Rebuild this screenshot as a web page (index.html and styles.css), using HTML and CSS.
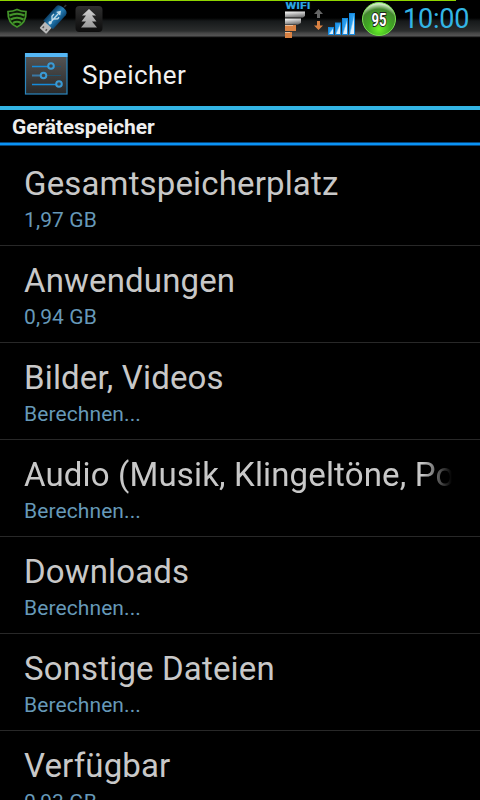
FILE: index.html
```html
<!DOCTYPE html>
<html lang="de">
<head>
    <meta charset="UTF-8">
    <meta name="viewport" content="width=device-width, initial-scale=1.0">
    <title>Speicher</title>
    <link rel="stylesheet" href="styles.css">
</head>
<body>
    <div class="statusbar">
        <div class="battery-line" style="width: 95%"></div>
        <div class="notifications">
            <svg width="120" height="38" viewBox="0 0 120 38">
                <defs>
                    <linearGradient id="usb" x1="0" y1="0" x2="1" y2="0">
                        <stop offset="0" stop-color="#0c3f66"/>
                        <stop offset=".5" stop-color="#2680b8"/>
                        <stop offset="1" stop-color="#0d4a78"/>
                    </linearGradient>
                    <linearGradient id="tile" x1="0" y1="0" x2="0" y2="1">
                        <stop offset="0" stop-color="#303030"/>
                        <stop offset="1" stop-color="#0c0c0c"/>
                    </linearGradient>
                    <linearGradient id="tree" x1="0" y1="0" x2="0" y2="1">
                        <stop offset="0" stop-color="#d0d0d0"/>
                        <stop offset="1" stop-color="#999"/>
                    </linearGradient>
                </defs>
                <!-- shield -->
                <path d="M8 11.5Q13 11.5 17 9.5Q21 11.5 26 11.5Q26.500 23 17 27Q7.500 23 8 11.5Z" fill="#0c1a08" stroke="#43952a" stroke-width="1.700"/>
                <path d="M9.500 15.500Q17 12 24.500 15.500M10.500 19.500Q17 16 23.500 19.500M13 23Q17 20.500 21 23" fill="none" stroke="#43952a" stroke-width="2.200"/>
                <!-- usb stick -->
                <g transform="translate(53.500 19) rotate(42)">
                    <path d="M0 -16V-19" stroke="#333" stroke-width="1.500"/>
                    <rect x="-4.500" y="7" width="9" height="9" rx="1" fill="#b9b9b9"/>
                    <path d="M-2 12V14M2 12V14" stroke="#555" stroke-width="1.500"/>
                    <path d="M-6.500 8V-11Q-6.500 -15 0 -15Q6.500 -15 6.500 -11V8Z" fill="url(#usb)"/>
                    <path d="M0 5V-9M-2 -7L0 -10L2 -7M0 2L-3 -1V-4M0 0L3 -3V-5" fill="none" stroke="#c4dce8" stroke-width="1.300"/>
                    <circle cx="0" cy="5" r="1.700" fill="#c4dce8"/>
                </g>
                <!-- tree -->
                <rect x="75.500" y="6" width="27" height="26" rx="4" fill="url(#tile)"/>
                <path d="M89 9L96 15.500H92L96.500 21.500H92L97 27.500H81L86 21.500H81.500L86 15.500H82Z" fill="url(#tree)"/>
            </svg>
        </div>
        <div class="indicators">
            <svg width="118" height="38" viewBox="280 0 118 38">
                <defs>
                    <linearGradient id="grey" x1="0" y1="0" x2=".3" y2="1">
                        <stop offset="0" stop-color="#fff"/>
                        <stop offset="1" stop-color="#777"/>
                    </linearGradient>
                    <linearGradient id="signal" x1="0" y1="0" x2="1" y2="1">
                        <stop offset="0" stop-color="#1a8ce4"/>
                        <stop offset=".45" stop-color="#2aa0f0"/>
                        <stop offset=".6" stop-color="#d9eefa"/>
                        <stop offset="1" stop-color="#e8f2fa"/>
                    </linearGradient>
                    <radialGradient id="ball" cx=".5" cy=".8" r=".75">
                        <stop offset="0" stop-color="#6cf52a"/>
                        <stop offset=".45" stop-color="#3faa22"/>
                        <stop offset=".8" stop-color="#43882e"/>
                        <stop offset="1" stop-color="#cfe8c4"/>
                    </radialGradient>
                </defs>
                <text class="wifi-label" x="285.500" y="8.500" textLength="25" lengthAdjust="spacingAndGlyphs">WIFI</text>
                <path d="M285 11.500H305V16L303 17.500H285Z" fill="url(#grey)"/>
                <path d="M285 18.500H301V23L298 24.500H285Z" fill="url(#grey)"/>
                <rect x="285" y="25" width="11" height="6" fill="#d98243"/>
                <rect x="285" y="32" width="7" height="6" fill="#d98243"/>
                <path d="M285 25.500H293M285 32.500H290" stroke="#e8bb98"/>
                <path d="M318.500 9L323 14H320V18H317V14H314Z" fill="#666"/>
                <path d="M318.500 30L323 25.500H320V21H317V25.500H314Z" fill="#d98243"/>
                <g fill="url(#signal)" stroke="#1688dc">
                    <rect x="328.500" y="27.500" width="5" height="7"/>
                    <rect x="335.500" y="23" width="5" height="11.500"/>
                    <rect x="342.500" y="18.500" width="5" height="16"/>
                    <rect x="349.500" y="13.500" width="5" height="21"/>
                </g>
                <circle cx="379" cy="19" r="16.500" fill="url(#ball)" stroke="#79e34f" stroke-width="1"/>
                <text class="battery-label" x="371.500" y="26" textLength="15" lengthAdjust="spacingAndGlyphs">95</text>
            </svg>
            <span class="clock">10:00</span>
        </div>
    </div>

    <div class="header">
        <svg class="header-icon" width="44" height="42" viewBox="0 0 44 42">
            <defs>
                <linearGradient id="panel" x1="0" y1="0" x2="0" y2="1">
                    <stop offset="0" stop-color="#565656"/>
                    <stop offset="1" stop-color="#292929"/>
                </linearGradient>
            </defs>
            <rect x="1.500" y="1" width="41.500" height="40" fill="url(#panel)" stroke="#2a86be" stroke-width="1.200"/>
            <rect x="1" y="0" width="42.500" height="4" fill="#55b7f5"/>
            <path d="M8 13.500H26M8 31.500H35" stroke="#168bda" stroke-width="1.500"/>
            <path d="M8 22.500H19" stroke="#3a78a4" stroke-width="2"/>
            <path d="M26 13.500H37M19 22.500H37" stroke="#1f536f" stroke-width="1.200"/>
            <g fill="#3c4348" stroke="#3a9ad4" stroke-width="2">
                <circle cx="27" cy="13" r="2.800"/>
                <circle cx="19.500" cy="22.500" r="2.800"/>
                <circle cx="35" cy="31" r="2.800"/>
            </g>
        </svg>
        <h1 class="header-title">Speicher</h1>
    </div>

    <h2 class="category">Gerätespeicher</h2>

    <ul class="list">
        <li class="item">
            <div class="title">Gesamtspeicherplatz</div>
            <div class="summary">1,97 GB</div>
        </li>
        <li class="item">
            <div class="title">Anwendungen</div>
            <div class="summary">0,94 GB</div>
        </li>
        <li class="item">
            <div class="title">Bilder, Videos</div>
            <div class="summary">Berechnen...</div>
        </li>
        <li class="item">
            <div class="title fade">Audio (Musik, Klingeltöne, Podcasts)</div>
            <div class="summary">Berechnen...</div>
        </li>
        <li class="item">
            <div class="title">Downloads</div>
            <div class="summary">Berechnen...</div>
        </li>
        <li class="item">
            <div class="title">Sonstige Dateien</div>
            <div class="summary">Berechnen...</div>
        </li>
        <li class="item">
            <div class="title">Verfügbar</div>
            <div class="summary">0,93 GB</div>
        </li>
    </ul>
</body>
</html>
```
FILE: styles.css
```css
* {
    box-sizing: border-box;
}
body {
    height: 800px;
    margin: 0;
    overflow: hidden;
    background-color: #000;
    color: #c8c8c8;
    font-family: Roboto, sans-serif;
}
.statusbar {
    position: relative;
    display: flex;
    justify-content: space-between;
    height: 38px;
    background: linear-gradient(#000 18px, #16191a 21px, #2b2d2d 31px, #444 33px, #555 36px, #111 37px, #000 38px);
}
/* battery level, drawn over the top edge of the bar */
.battery-line {
    position: absolute;
    top: 0;
    left: 0;
    height: 1px;
    background-color: #8fd400;
}
.indicators {
    display: flex;
    padding-right: 11px;
}
.wifi-label {
    font-size: 9px;
    font-weight: 900;
    fill: #2aa4e0;
}
.battery-label {
    font-size: 19px;
    font-weight: 700;
    fill: #fff;
    stroke: #222;
    stroke-width: 2px;
    paint-order: stroke;
}
.clock {
    width: 66px;
    margin-left: 5px;
    font-size: 27px;
    letter-spacing: -0.2px;
    line-height: 39px;
    color: #33b5e5;
}
.header {
    display: flex;
    align-items: center;
    height: 72px;
    padding-left: 24px;
    border-bottom: 4px solid #33b5e5;
}
.header-icon {
    margin-top: 4px;
}
.header-title {
    margin: 6px 0 0 14px;
    font-size: 26px;
    font-weight: 400;
    letter-spacing: 0.45px;
    line-height: 32px;
    color: #f0f0f0;
}
.category {
    height: 36px;
    margin: 0;
    padding-left: 12px;
    background: linear-gradient(#06457a, #06457a 1px, #0a93f5 1px, #0a93f5 3px, #06457a 3px) bottom / 100% 4px no-repeat;
    font-size: 21px;
    font-weight: 700;
    letter-spacing: -0.1px;
    line-height: 34px;
    color: #eee;
}
.list {
    margin: 0;
    padding: 3px 0 0;
    list-style: none;
}
.item {
    height: 97px;
    padding: 15px 28px 0 24px;
    border-bottom: 1px solid #282828;
}
.title {
    overflow: hidden;
    font-size: 33px;
    letter-spacing: 0.15px;
    line-height: 40px;
    white-space: nowrap;
}
.fade {
    -webkit-mask-image: linear-gradient(to left, transparent, #000 30px);
    mask-image: linear-gradient(to left, transparent, #000 30px);
}
.summary {
    font-size: 21px;
    letter-spacing: 0.1px;
    line-height: 32px;
    color: #6699b8;
}
```
